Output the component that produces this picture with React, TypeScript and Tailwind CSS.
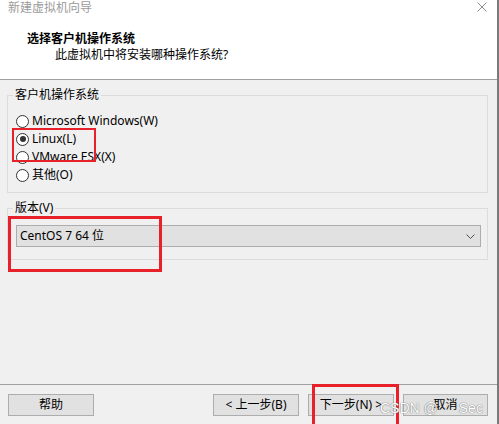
import type { ReactNode } from 'react'

const FONT = { fontFamily: '"Noto Sans", "Noto Sans CJK SC", sans-serif' }

function Radio({ label, checked }: { label: string; checked?: boolean }) {
  return (
    <div className="flex h-[18px] items-center">
      <span className="ml-[8px] flex h-[13px] w-[13px] items-center justify-center rounded-full border border-[#333] bg-white">
        {checked && <span className="h-[6px] w-[6px] rounded-full bg-[#333]" />}
      </span>
      <span className="ml-[3px] text-[12px] leading-[18px] text-black">{label}</span>
    </div>
  )
}

function Group({ title, children, className }: { title: string; children: ReactNode; className?: string }) {
  return (
    <fieldset className={`ml-[7px] w-[481px] border border-[#dcdcdc] px-0 ${className ?? ''}`}>
      <legend className="ml-[5px] px-[2px] text-[12px] leading-[16px] text-black">{title}</legend>
      {children}
    </fieldset>
  )
}

function Button({ children, className }: { children: ReactNode; className?: string }) {
  return (
    <button
      className={`flex h-[22px] items-center justify-center border border-[#adadad] bg-[#e1e1e1] text-[12px] text-black ${className ?? ''}`}
    >
      {children}
    </button>
  )
}

export default function App() {
  return (
    <div className="relative flex h-[424px] w-[499px] flex-col overflow-hidden border-r-2 border-[#7a7a7a] bg-[#f0f0f0]" style={FONT}>
      {/* header */}
      <div className="relative h-[80px] border-b border-[#a0a0a0] bg-white">
        <div className="ml-[8px] text-[12px] leading-[16px] text-[#9b9b9b]">新建虚拟机向导</div>
        <svg className="absolute left-[477px] top-[2px]" width="10" height="10" viewBox="0 0 10 10">
          <path d="M0.5 0.5 L9.5 9.5 M9.5 0.5 L0.5 9.5" stroke="#8a8a8a" strokeWidth="1" />
        </svg>
        <div className="ml-[27px] mt-[15px] text-[12px] font-bold leading-[16px] text-black">选择客户机操作系统</div>
        <div className="ml-[55px] text-[12px] leading-[16px] text-black">此虚拟机中将安装哪种操作系统?</div>
      </div>

      {/* body */}
      <div className="flex flex-1 flex-col pt-[7px]">
        <Group title="客户机操作系统" className="pb-[8px]">
          <div className="mt-[9px] flex flex-col">
            <Radio label="Microsoft Windows(W)" />
            <Radio label="Linux(L)" checked />
            <Radio label="VMware ESX(X)" />
            <Radio label="其他(O)" />
          </div>
        </Group>

        <Group title="版本(V)" className="mt-[7px] pb-[12px]">
          <div className="ml-[8px] mr-[6px] mt-[9px] flex h-[22px] items-center justify-between border border-[#adadad] bg-[#e1e1e1] pl-[3px] pr-[5px]">
            <span className="text-[12px] text-black">CentOS 7 64 位</span>
            <svg width="9" height="5" viewBox="0 0 9 5">
              <path d="M0.5 0.5 L4.5 4.5 L8.5 0.5" fill="none" stroke="#505050" strokeWidth="1" />
            </svg>
          </div>
        </Group>
      </div>

      {/* footer */}
      <div className="flex h-[40px] items-start border-t border-[#a0a0a0] pt-[9px]">
        <Button className="ml-[8px] w-[86px]">帮助</Button>
        <div className="flex-1" />
        <Button className="w-[86px]">&lt; 上一步(B)</Button>
        <Button className="ml-[9px] w-[86px]">下一步(N) &gt;</Button>
        <Button className="ml-[9px] mr-[9px] w-[85px]">取消</Button>
      </div>

      {/* annotations */}
      <div className="pointer-events-none absolute left-[12px] top-[128px] h-[34px] w-[84px] border-2 border-[#e8202a]" />
      <div className="pointer-events-none absolute left-[8px] top-[216px] h-[56px] w-[154px] border-[3px] border-[#e8202a]" />
      <div className="pointer-events-none absolute left-[312px] top-[384px] h-[50px] w-[87px] border-[3px] border-[#e8202a]" />
      <div
        className="pointer-events-none absolute left-[380px] top-[399px] flex whitespace-nowrap text-[14px] leading-[18px] text-white"
        style={{ fontFamily: '"Liberation Sans", sans-serif', textShadow: '0 0 1px #777, 0 0 1px #777' }}
      >
        <span>CSDN @</span>
        <span className="ml-[21px]">Sec</span>
      </div>
    </div>
  )
}
